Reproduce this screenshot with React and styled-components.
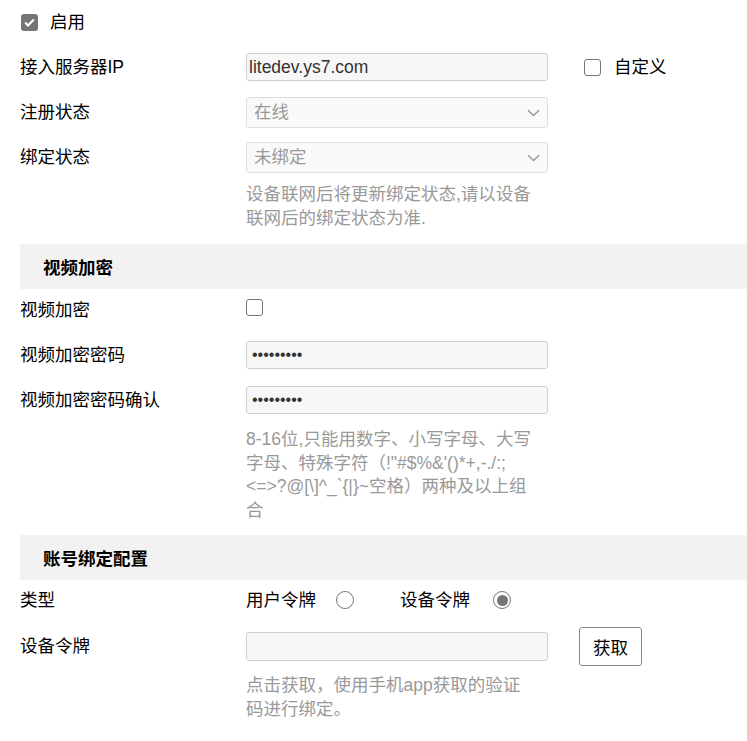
import React from 'react';
import styled, { createGlobalStyle } from 'styled-components';

const GlobalStyle = createGlobalStyle`
  body {
    margin: 0;
    background: #fff;
    font-family: "Liberation Sans", "Noto Sans CJK SC", sans-serif;
    font-size: 17.5px;
    color: #000;
  }
`;

const Page = styled.div`
  padding: 0 0 20px 20px;
`;

const Row = styled.div`
  display: grid;
  grid-template-columns: 226px auto;
  align-items: center;
  height: ${p => p.$h || 28}px;
  margin-top: ${p => p.$mt || 0}px;
`;

const Label = styled.div`
  line-height: 1.4;
  white-space: nowrap;
  padding-top: ${p => p.$pt || 0}px;
`;

const Field = styled.div`
  display: flex;
  align-items: center;
`;

const Inline = styled.label`
  display: flex;
  align-items: center;
  gap: ${p => p.$gap || 12}px;
  margin-left: ${p => p.$ml || 0}px;
  line-height: 1.4;
`;

const Box = styled.span`
  box-sizing: border-box;
  width: 17px;
  height: 17px;
  border-radius: 3px;
  display: inline-flex;
  align-items: center;
  justify-content: center;
  flex-shrink: 0;
  background: ${p => (p.$checked ? '#767676' : '#fff')};
  border: ${p => (p.$checked ? 'none' : '1.5px solid #767676')};
  margin-left: ${p => p.$ml || 0}px;
`;

const Radio = styled.span`
  box-sizing: border-box;
  width: 18px;
  height: 18px;
  border-radius: 50%;
  border: 1.5px solid #767676;
  display: inline-flex;
  align-items: center;
  justify-content: center;
  flex-shrink: 0;

  &::after {
    content: '';
    width: 11px;
    height: 11px;
    border-radius: 50%;
    background: ${p => (p.$checked ? '#767676' : 'transparent')};
  }
`;

const TextInput = styled.input`
  box-sizing: border-box;
  width: 302px;
  height: ${p => p.$h || 28}px;
  padding: 1px 2px 1px ${p => p.$pl || 2}px;
  border: 1px solid #cfcfcf;
  border-radius: 3px;
  background: #f7f7f7;
  font-family: inherit;
  font-size: ${p => p.$fs || 17.5}px;
  color: #333;
  outline: none;
`;

const Select = styled.div`
  box-sizing: border-box;
  width: 302px;
  height: 31px;
  padding: 0 7px;
  border: 1px solid #dedede;
  border-radius: 3px;
  background: #f9f9f9;
  color: #999;
  display: flex;
  align-items: center;
  justify-content: space-between;
  line-height: 1.4;
`;

const Hint = styled.div`
  margin-top: ${p => p.$mt || 0}px;
  padding-left: 226px;
  color: #999;
  line-height: ${p => p.$lh || 23.5}px;
  white-space: nowrap;
`;

const SectionHeader = styled.div`
  margin-top: ${p => p.$mt || 0}px;
  height: 45px;
  background: #f2f2f2;
  padding-left: 23px;
  display: flex;
  align-items: center;
  font-weight: bold;
`;

const Button = styled.button`
  box-sizing: border-box;
  width: 63px;
  height: 39px;
  margin-left: 31px;
  border: 1px solid #8a8a8a;
  border-radius: 3px;
  background: #fff;
  font-family: inherit;
  font-size: 17.5px;
  color: #000;
  padding: 0;
`;

const Check = () => (
  <svg width="11" height="9" viewBox="0 0 11 9">
    <path d="M1.2 4.6 L4.1 7.4 L9.8 1.4" fill="none" stroke="#fff" strokeWidth="2.2" />
  </svg>
);

const Chevron = () => (
  <svg width="13" height="8" viewBox="0 0 13 8">
    <path d="M1 1.2 L6.5 6.5 L12 1.2" fill="none" stroke="#9a9a9a" strokeWidth="1.5" />
  </svg>
);

export default function App() {
  return (
    <Page>
      <GlobalStyle />

      <Row $mt={8}>
        <Inline $gap={12}>
          <Box $checked $ml={1}><Check /></Box>
          启用
        </Inline>
      </Row>

      <Row $mt={17}>
        <Label>接入服务器IP</Label>
        <Field>
          <TextInput readOnly defaultValue="litedev.ys7.com" />
          <Inline $gap={13} $ml={36}>
            <Box />
            自定义
          </Inline>
        </Field>
      </Row>

      <Row $mt={16} $h={31}>
        <Label>注册状态</Label>
        <Select>在线<Chevron /></Select>
      </Row>

      <Row $mt={14} $h={31}>
        <Label>绑定状态</Label>
        <Select>未绑定<Chevron /></Select>
      </Row>

      <Hint $mt={9} $lh={24}>
        设备联网后将更新绑定状态,请以设备<br />
        联网后的绑定状态为准.
      </Hint>

      <SectionHeader $mt={14}>视频加密</SectionHeader>

      <Row $mt={4}>
        <Label $pt={5}>视频加密</Label>
        <Field><Box /></Field>
      </Row>

      <Row $mt={20}>
        <Label>视频加密密码</Label>
        <TextInput type="password" readOnly defaultValue="123456789" $fs={16} $pl={5} />
      </Row>

      <Row $mt={17}>
        <Label>视频加密密码确认</Label>
        <TextInput type="password" readOnly defaultValue="123456789" $fs={16} $pl={5} />
      </Row>

      <Hint $mt={14}>
        8-16位,只能用数字、小写字母、大写<br />
        {'字母、特殊字符（!"#$%&\'()*+,-./:;'}<br />
        {'<=>?@[\\]^_`{|}~空格）两种及以上组'}<br />
        合
      </Hint>

      <SectionHeader $mt={13}>账号绑定配置</SectionHeader>

      <Row $mt={6}>
        <Label>类型</Label>
        <Field>
          <Inline $gap={20}>
            用户令牌
            <Radio />
          </Inline>
          <Inline $gap={23} $ml={46}>
            设备令牌
            <Radio $checked />
          </Inline>
        </Field>
      </Row>

      <Row $mt={13} $h={39}>
        <Label>设备令牌</Label>
        <Field>
          <TextInput readOnly defaultValue="" $h={29} />
          <Button>获取</Button>
        </Field>
      </Row>

      <Hint $mt={8}>
        点击获取，使用手机app获取的验证<br />
        码进行绑定。
      </Hint>
    </Page>
  );
}
